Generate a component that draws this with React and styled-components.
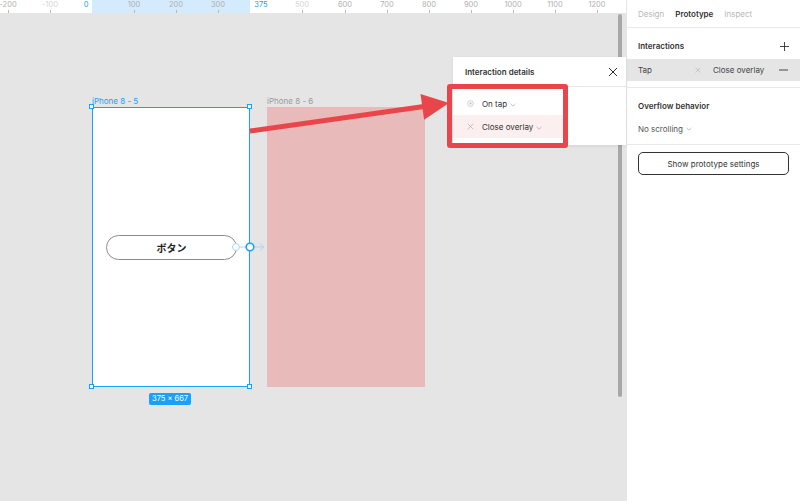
import React from 'react';
import styled, {createGlobalStyle} from 'styled-components';

const BLUE = '#18a0fb';
const RED = '#e8464b';

const GlobalStyle = createGlobalStyle`
  html, body {
    margin: 0;
    padding: 0;
    background: #e5e5e5;
    font-family: Inter, "Noto Sans", "Noto Sans CJK JP", sans-serif;
    -webkit-font-smoothing: antialiased;
  }
`;

const Shell = styled.div`
  display: flex;
  width: 800px;
  height: 501px;
  overflow: hidden;
`;

const Canvas = styled.div`
  width: 626px;
  display: flex;
  flex-direction: column;
  background: #e5e5e5;
`;

const Ruler = styled.div`
  position: relative;
  height: 13px;
  background: #fff;
  flex-shrink: 0;
`;

const RulerSelection = styled.div`
  position: absolute;
  left: 92px;
  width: 158px;
  top: 0;
  bottom: 0;
  background: #d4ebfd;
`;

const RulerLabel = styled.span`
  position: absolute;
  top: 1px;
  font-size: 7.5px;
  line-height: 8px;
  color: ${p => (p.$active ? BLUE : p.$faint ? '#d6d6d6' : '#b0b0b0')};
  transform: translateX(-50%);
  white-space: nowrap;
`;

const RulerTick = styled.span`
  position: absolute;
  bottom: 0;
  width: 1px;
  height: 3px;
  background: #b8b8b8;
`;

const Stage = styled.div`
  position: relative;
  flex: 1;
`;

const Scrollbar = styled.div`
  position: absolute;
  left: 618px;
  top: 1px;
  width: 4px;
  height: 383px;
  border-radius: 2px;
  background: #a7a7a7;
`;

const FrameLabel = styled.div`
  position: absolute;
  left: ${p => p.$x}px;
  top: 83px;
  font-size: 8px;
  line-height: 10px;
  color: ${p => (p.$selected ? BLUE : '#9a9a9a')};
`;

const Frame = styled.div`
  position: absolute;
  left: ${p => p.$x}px;
  top: 94px;
  width: 158px;
  height: 280px;
  box-sizing: border-box;
  background: ${p => (p.$pink ? '#e9baba' : '#fff')};
  border: ${p => (p.$selected ? `1px solid ${BLUE}` : 'none')};
`;

const Handle = styled.span`
  position: absolute;
  width: 5px;
  height: 5px;
  box-sizing: border-box;
  background: #fff;
  border: 1px solid ${BLUE};
  left: ${p => p.$x - 3}px;
  top: ${p => p.$y - 3}px;
`;

const PillButton = styled.div`
  position: absolute;
  left: 13px;
  top: 127px;
  width: 131px;
  height: 25px;
  box-sizing: border-box;
  border: 1px solid #8c8c8c;
  border-radius: 13px;
  display: flex;
  align-items: center;
  justify-content: center;
  font-family: "Noto Sans CJK JP", sans-serif;
  font-weight: 700;
  font-size: 10px;
  color: #222;
`;

const SizeBadge = styled.div`
  position: absolute;
  left: 149px;
  top: 380px;
  padding: 0 3px;
  height: 12px;
  line-height: 12px;
  border-radius: 2px;
  background: ${BLUE};
  color: #fff;
  font-size: 7.5px;
`;

const Overlay = styled.svg`
  position: absolute;
  left: 0;
  top: 0;
  overflow: visible;
  pointer-events: none;
`;

const Popover = styled.div`
  position: absolute;
  left: 453px;
  top: 44px;
  width: 173px;
  height: 88px;
  background: #fff;
  box-shadow: 0 1px 3px rgba(0, 0, 0, 0.08);
  display: flex;
  flex-direction: column;
`;

const PopoverHeader = styled.div`
  height: 29px;
  display: flex;
  align-items: center;
  justify-content: space-between;
  padding: 0 8px 0 12px;
  border-bottom: 1px solid #e6e6e6;
  font-size: 8px;
  font-weight: 600;
  color: #333;
`;

const PopoverBody = styled.div`
  display: flex;
  flex-direction: column;
  padding-top: 5px;
`;

const ActionRow = styled.div`
  height: 23px;
  display: flex;
  align-items: center;
  gap: 8px;
  padding-left: 14px;
  margin-right: 62px;
  font-size: 8px;
  color: #333;
  background: ${p => (p.$tint ? '#fcefef' : 'transparent')};
`;

const Caret = styled.span`
  display: inline-flex;
  margin-left: 3px;
`;

const Highlight = styled.div`
  position: absolute;
  left: 447px;
  top: 71px;
  width: 121px;
  height: 64px;
  box-sizing: border-box;
  border: 5px solid ${RED};
  border-radius: 3px;
`;

const Panel = styled.div`
  width: 174px;
  background: #fff;
  border-left: 1px solid #e5e5e5;
  box-sizing: border-box;
  display: flex;
  flex-direction: column;
  font-size: 8px;
  color: #333;
`;

const Tabs = styled.div`
  height: 27px;
  display: flex;
  align-items: center;
  gap: 11px;
  padding-left: 11px;
  border-bottom: 1px solid #e9e9e9;
`;

const Tab = styled.span`
  font-weight: ${p => (p.$active ? 600 : 400)};
  color: ${p => (p.$active ? '#333' : '#b7b7b7')};
`;

const Section = styled.div`
  display: flex;
  flex-direction: column;
  border-bottom: 1px solid #e9e9e9;
  padding-bottom: ${p => p.$pb || 0}px;
`;

const SectionTitle = styled.div`
  height: 31px;
  box-sizing: border-box;
  padding: 5px 11px 0;
  display: flex;
  align-items: center;
  justify-content: space-between;
  font-weight: 600;
`;

const InteractionRow = styled.div`
  height: 22px;
  display: flex;
  align-items: center;
  padding: 0 11px;
  background: #e5e5e5;
  color: #444;
`;

const Cell = styled.span`
  width: ${p => p.$w}px;
  flex-shrink: 0;
`;

const Select = styled.div`
  height: 20px;
  display: flex;
  align-items: center;
  padding: 0 11px;
  color: #555;
`;

const SettingsButton = styled.button`
  margin: 7px 11px 0;
  height: 23px;
  border: 1px solid #333;
  border-radius: 5px;
  background: #fff;
  font-family: inherit;
  font-size: 8px;
  color: #333;
`;

const Chevron = ({color = '#b3b3b3'}) => (
  <svg width="6" height="4" viewBox="0 0 6 4">
    <path d="M0.5 0.8 L3 3.2 L5.5 0.8" fill="none" stroke={color} strokeWidth="0.8" />
  </svg>
);

const Cross = ({size = 6, color = '#bbb', width = 0.8}) => (
  <svg width={size} height={size} viewBox="0 0 10 10">
    <path d="M1 1 L9 9 M9 1 L1 9" stroke={color} strokeWidth={width * (10 / size)} />
  </svg>
);

const rulerMarks = [
  {x: 8, t: '-200'},
  {x: 50, t: '-100', faint: true},
  {x: 86, t: '0', active: true, noTick: true},
  {x: 134, t: '100'},
  {x: 176, t: '200'},
  {x: 218, t: '300'},
  {x: 261, t: '375', active: true, noTick: true},
  {x: 302, t: '500', faint: true},
  {x: 345, t: '600'},
  {x: 387, t: '700'},
  {x: 429, t: '800'},
  {x: 471, t: '900'},
  {x: 513, t: '1000'},
  {x: 555, t: '1100'},
  {x: 597, t: '1200'}
];

// red call-out arrow head, stage coordinates (stage starts at y=13)
const arrowHead = '449,90 420.5,80.9 424.1,106.7';

export default function App() {
  return (
    <>
      <GlobalStyle />
      <Shell>
        <Canvas>
          <Ruler>
            <RulerSelection />
            {rulerMarks.map(m => (
              <React.Fragment key={m.t}>
                <RulerLabel style={{left: m.x}} $active={m.active} $faint={m.faint}>
                  {m.t}
                </RulerLabel>
                {!m.noTick && <RulerTick style={{left: m.x}} />}
              </React.Fragment>
            ))}
          </Ruler>

          <Stage>
            <Scrollbar />

            <FrameLabel $x={92} $selected>iPhone 8 - 5</FrameLabel>
            <Frame $x={92} $selected>
              <PillButton>ボタン</PillButton>
            </Frame>
            <Handle $x={92} $y={94} />
            <Handle $x={250} $y={94} />
            <Handle $x={92} $y={374} />
            <Handle $x={250} $y={374} />
            <SizeBadge>375 × 667</SizeBadge>

            <FrameLabel $x={267}>iPhone 8 - 6</FrameLabel>
            <Frame $x={267} $pink />

            <Overlay width="626" height="488">
              <line x1="239.5" y1="234" x2="246" y2="234" stroke="#a8d7fc" strokeWidth="1" />
              <circle cx="236" cy="234" r="3.5" fill="#fff" stroke="#a8d7fc" strokeWidth="1" />
              <line x1="254" y1="234" x2="264" y2="234" stroke="#a8d7fc" strokeWidth="1" />
              <path d="M260 230.5 L264 234 L260 237.5" fill="none" stroke="#a8d7fc" strokeWidth="1" />
              <circle cx="250" cy="234" r="3.8" fill="#fff" stroke={BLUE} strokeWidth="1.6" />
            </Overlay>

            <Popover>
              <PopoverHeader>
                Interaction details
                <Cross size={10} color="#333" width={1} />
              </PopoverHeader>
              <PopoverBody>
                <ActionRow>
                  <svg width="7" height="7" viewBox="0 0 8 8">
                    <circle cx="4" cy="4" r="3.3" fill="none" stroke="#c4c4c4" strokeWidth="0.9" />
                    <circle cx="4" cy="4" r="1.3" fill="#c4c4c4" />
                  </svg>
                  <span>
                    On tap
                    <Caret>
                      <Chevron />
                    </Caret>
                  </span>
                </ActionRow>
                <ActionRow $tint>
                  <Cross size={7} color="#b8b8b8" />
                  <span>
                    Close overlay
                    <Caret>
                      <Chevron />
                    </Caret>
                  </span>
                </ActionRow>
              </PopoverBody>
            </Popover>

            <Highlight />
            <Overlay width="626" height="488">
              <line x1="250" y1="118" x2="424" y2="93.6" stroke={RED} strokeWidth="5" />
              <polygon points={arrowHead} fill={RED} />
            </Overlay>
          </Stage>
        </Canvas>

        <Panel>
          <Tabs>
            <Tab>Design</Tab>
            <Tab $active>Prototype</Tab>
            <Tab>Inspect</Tab>
          </Tabs>

          <Section $pb={6}>
            <SectionTitle>
              Interactions
              <svg width="9" height="9" viewBox="0 0 9 9">
                <path d="M4.5 0 V9 M0 4.5 H9" stroke="#333" strokeWidth="0.9" />
              </svg>
            </SectionTitle>
            <InteractionRow>
              <Cell $w={57}>Tap</Cell>
              <Cell $w={18}>
                <Cross size={6} color="#bdbdbd" />
              </Cell>
              <Cell $w={66}>Close overlay</Cell>
              <svg width="9" height="2" viewBox="0 0 9 2">
                <path d="M0 1 H9" stroke="#333" strokeWidth="0.9" />
              </svg>
            </InteractionRow>
          </Section>

          <Section $pb={5}>
            <SectionTitle>Overflow behavior</SectionTitle>
            <Select>
              No scrolling
              <Caret>
                <Chevron />
              </Caret>
            </Select>
          </Section>

          <SettingsButton>Show prototype settings</SettingsButton>
        </Panel>
      </Shell>
    </>
  );
}
